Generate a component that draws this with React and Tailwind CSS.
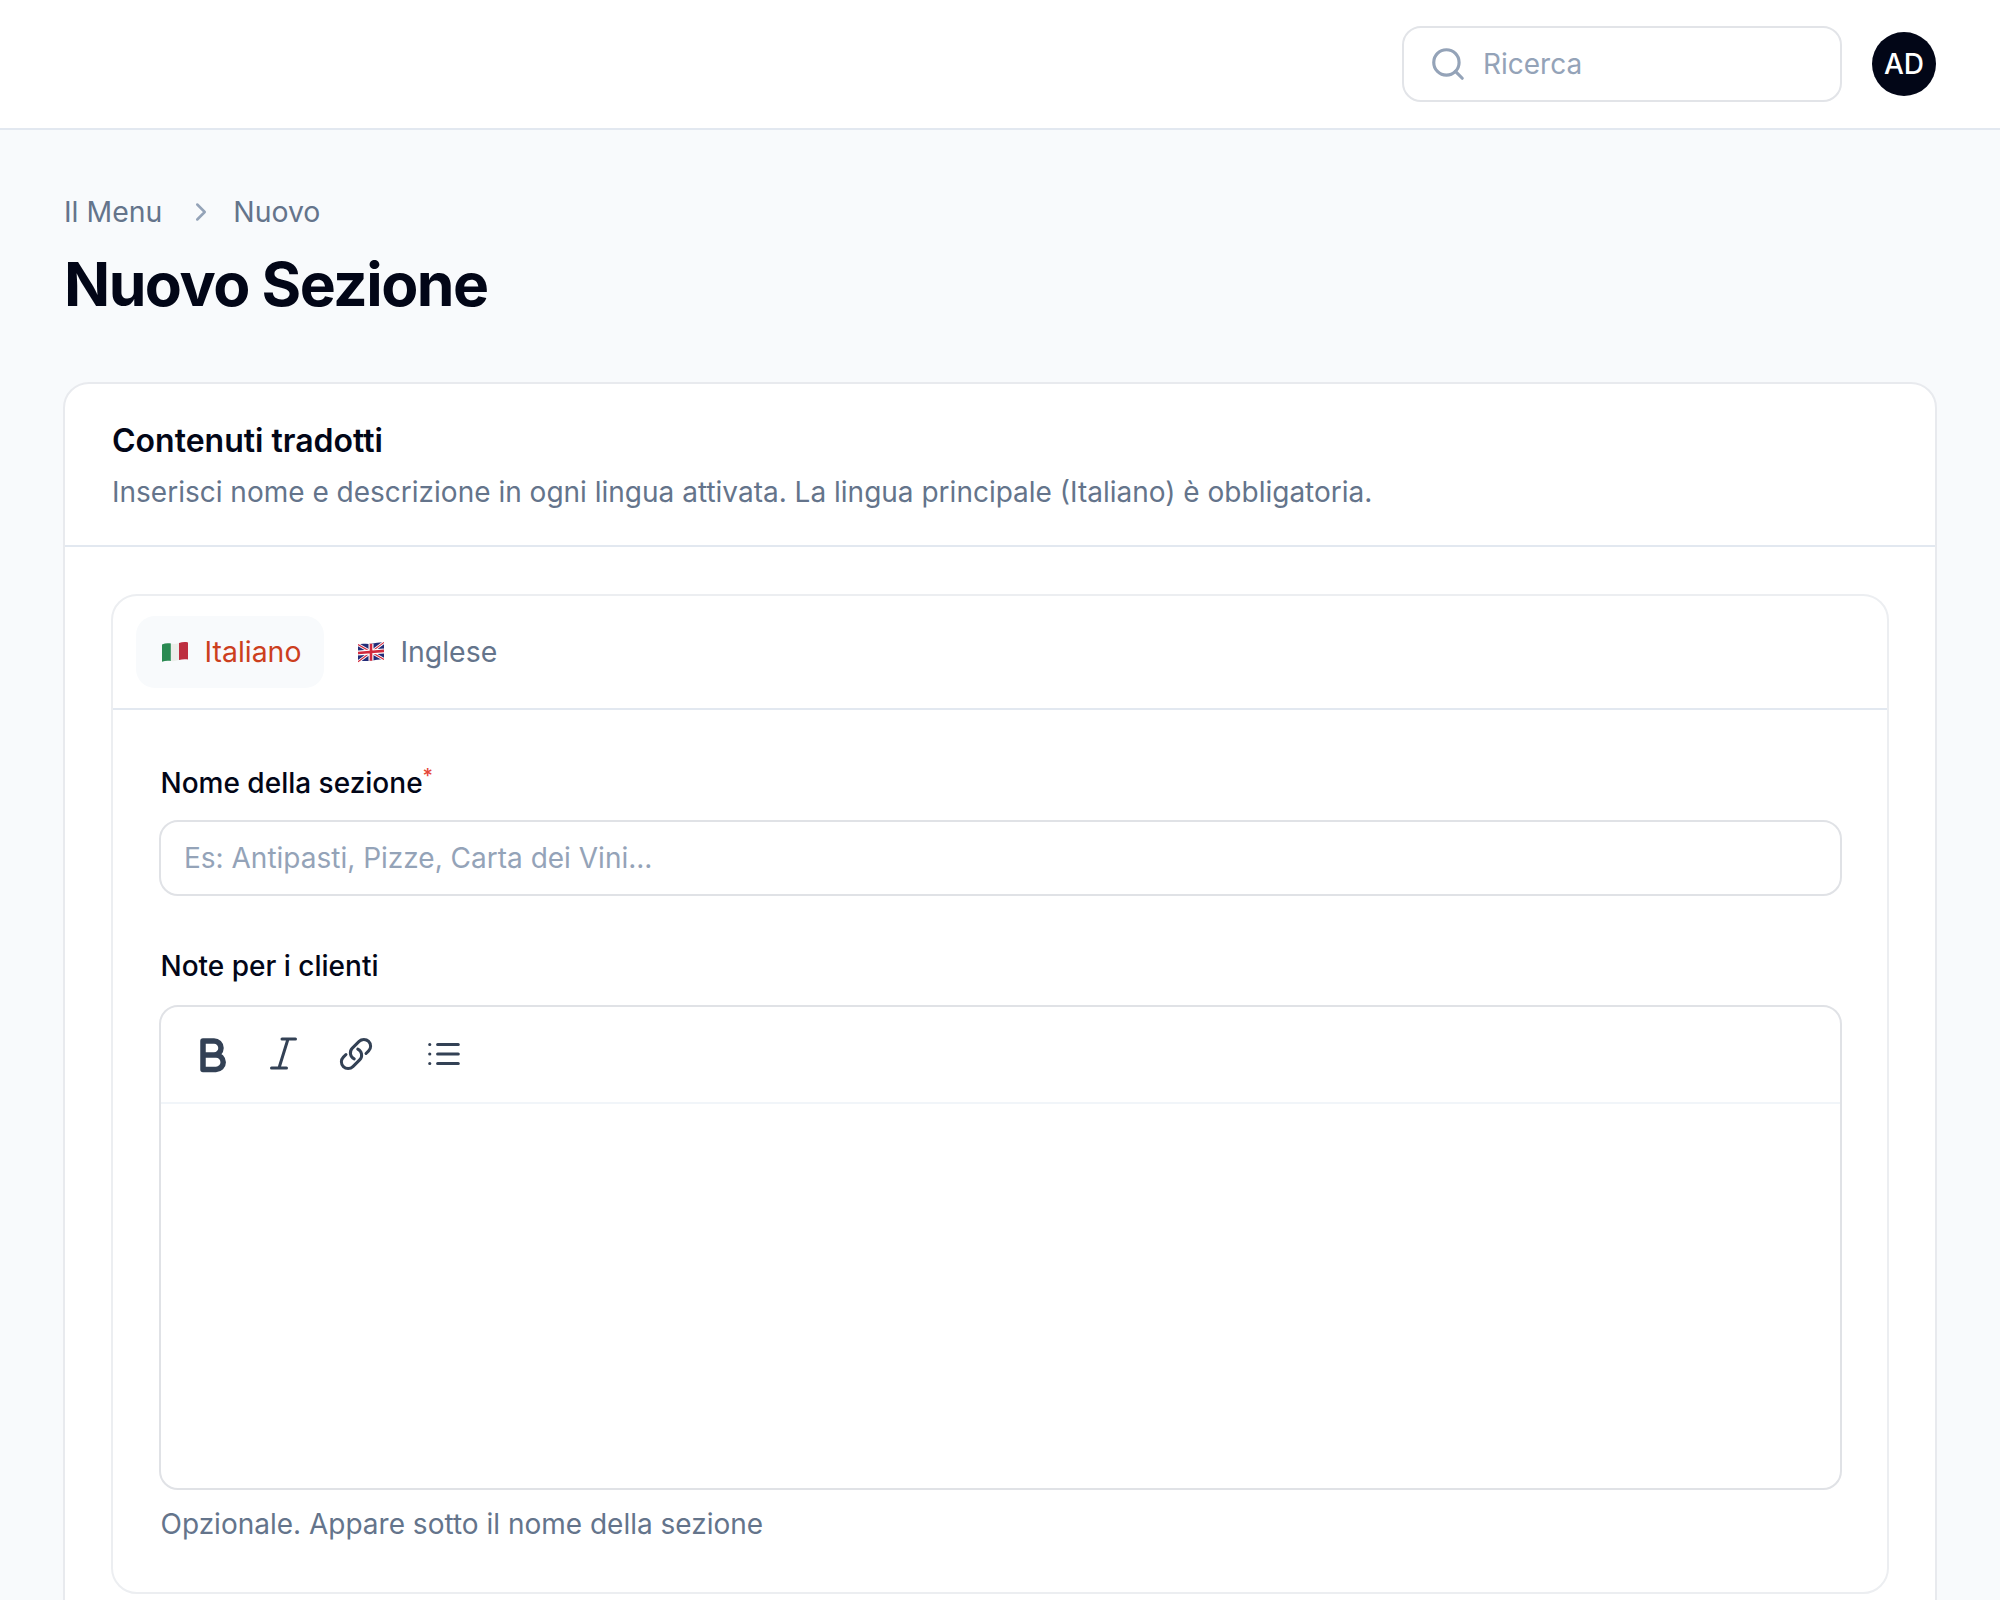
import React from "react";

const FlagIt = () => (
  <svg width="26" height="22" viewBox="0 0 26 22" className="shrink-0">
    <path d="M0 3.4 C3 2.2 6 2 9 2.6 L9 20 C6 19.4 3 19.6 0 20.8 Z" fill="#2a8a52" />
    <path d="M8.8 2.6 C11.5 3.2 14 3 17 2 L17 19 C14 20 11.5 20.4 8.8 20 Z" fill="#eceeea" />
    <path d="M17 2 C20 1 23 0.8 26 1.4 L26 18.4 C23 17.9 20 18.1 17 19 Z" fill="#bd2f40" />
  </svg>
);

const FlagUk = () => (
  <svg width="26" height="22" viewBox="0 0 26 22" className="shrink-0">
    <path d="M0 3.6 C4 2 8 3.2 13 2.8 C18 2.4 22 1 26 1.4 L26 18.4 C22 17.9 18 19.4 13 19.8 C8 20.2 4 19.5 0 20.8 Z" fill="#232c78" />
    <path d="M0 3.6 L26 18.4 M26 1.4 L0 20.8" stroke="#fff" strokeWidth="3" />
    <path d="M0 3.6 L26 18.4 M26 1.4 L0 20.8" stroke="#d2283c" strokeWidth="1.1" />
    <path d="M13 2.8 L13 19.8 M0 12 L26 9.9" stroke="#fff" strokeWidth="5" />
    <path d="M13 2.8 L13 19.8 M0 12 L26 9.9" stroke="#d2283c" strokeWidth="2.6" />
  </svg>
);

export default function App() {
  return (
    <div className="h-[1600px] overflow-hidden bg-[#f8fafc] text-[#020617] font-['Inter',sans-serif]">
      <header className="h-[130px] bg-white border-b-2 border-[#e2e8f0] flex items-center justify-end gap-[30px] pr-[64px]">
        <div className="w-[440px] h-[76px] border-2 border-[#e2e4e8] rounded-[19px] flex items-center gap-[16px] pl-[25px]">
          <svg width="38" height="38" viewBox="0 0 24 24" fill="none" stroke="#94a3b8" strokeWidth="2" strokeLinecap="round">
            <circle cx="11" cy="11" r="8" />
            <path d="M21 21l-4.3-4.3" />
          </svg>
          <span className="text-[28px] text-[#94a3b8]">Ricerca</span>
        </div>
        <div className="w-[64px] h-[64px] rounded-full bg-[#020617] text-white text-[28px] font-medium flex items-center justify-center">AD</div>
      </header>

      <main className="px-[63px] pt-[63px]">
        <div className="flex items-center pl-[1px] text-[28.4px] leading-[38px] text-[#64748b]">
          <span>Il Menu</span>
          <svg className="ml-[23.5px] mr-[17.5px]" width="30" height="30" viewBox="0 0 24 24" fill="none" stroke="#94a3b8" strokeWidth="2" strokeLinecap="round" strokeLinejoin="round">
            <path d="M9 18l6-6-6-6" />
          </svg>
          <span>Nuovo</span>
        </div>
        <h1 className="mt-[14.5px] pl-[1px] text-[60.6px] leading-[76px] font-bold tracking-[-1.52px]">Nuovo Sezione</h1>

        <section className="mt-[60px] bg-white border-2 border-[#e8eaee] rounded-[26px]">
          <div className="h-[163.5px] pt-[5px] px-[47px] border-b-2 border-[#e2e8f0] flex flex-col justify-center gap-[13px]">
            <h2 className="text-[32px] leading-[38px] font-semibold">Contenuti tradotti</h2>
            <p className="text-[28px] leading-[38px] text-[#64748b]">Inserisci nome e descrizione in ogni lingua attivata. La lingua principale (Italiano) è obbligatoria.</p>
          </div>

          <div className="px-[46px] pt-[47px] pb-[200px]">
            <div className="border-2 border-[#eceef1] rounded-[26px] h-[1000px]">
              <div className="h-[114px] border-b-2 border-[#e2e8f0] flex items-center px-[23px] gap-[10px] text-[28.4px]">
                <div className="h-[72px] pl-[25.5px] pr-[23px] rounded-[19px] bg-[#f8fafc] flex items-center gap-[17px] text-[#cc3f1e]">
                  <FlagIt />
                  <span>Italiano</span>
                </div>
                <div className="h-[72px] px-[24px] flex items-center gap-[16px] text-[#64748b]">
                  <FlagUk />
                  <span>Inglese</span>
                </div>
              </div>

              <div className="px-[45.5px] pt-[54px]">
                <label className="block pl-[2px] text-[28px] leading-[38px] font-medium">
                  Nome della sezione<sup className="text-[#e5483a] text-[20px]">*</sup>
                </label>
                <div className="mt-[18px] h-[76px] border-2 border-[#e0e2e6] rounded-[19px] flex items-center px-[23.5px] text-[28px] text-[#94a3b8]">
                  Es: Antipasti, Pizze, Carta dei Vini...
                </div>

                <label className="block mt-[51px] pl-[2px] text-[28px] leading-[38px] font-medium">Note per i clienti</label>
                <div className="mt-[20px] h-[485px] border-2 border-[#e0e2e6] rounded-[19px]">
                  <div className="h-[96.5px] border-b-2 border-[#f1f5f9] flex items-center pl-[27px] text-[#334155]">
                    <svg width="48" height="48" viewBox="0 0 48 48" fill="none" stroke="currentColor" strokeWidth="5.5" strokeLinejoin="round">
                      <path d="M15 11h11a7 7 0 0 1 0 14H15zM15 25h13a7.2 7.2 0 0 1 0 14.4H15z" />
                    </svg>
                    <svg className="ml-[29.5px]" width="32" height="38" viewBox="0 0 32 38" fill="none" stroke="currentColor" strokeWidth="3" strokeLinecap="round">
                      <path d="M17 4h13.5M6.5 33h15M23 4L14 33" />
                    </svg>
                    <svg className="ml-[41px]" width="36" height="36" viewBox="0 0 24 24" fill="none" stroke="currentColor" strokeWidth="2" strokeLinecap="round" strokeLinejoin="round">
                      <path d="M13.19 8.688a4.5 4.5 0 0 1 1.242 7.244l-4.5 4.5a4.5 4.5 0 0 1-6.364-6.364l1.757-1.757m13.35-.622 1.757-1.757a4.5 4.5 0 0 0-6.364-6.364l-4.5 4.5a4.5 4.5 0 0 0 1.242 7.244" />
                    </svg>
                    <svg className="ml-[51px]" width="38" height="38" viewBox="0 0 24 24" fill="none" stroke="currentColor" strokeWidth="2" strokeLinecap="round">
                      <path d="M3 6h.01M3 12h.01M3 18h.01M8 6h13M8 12h13M8 18h13" />
                    </svg>
                  </div>
                </div>
                <p className="mt-[15px] pl-[2px] text-[28px] leading-[38px] text-[#64748b]">Opzionale. Appare sotto il nome della sezione</p>
              </div>
            </div>
          </div>
        </section>
      </main>
    </div>
  );
}
